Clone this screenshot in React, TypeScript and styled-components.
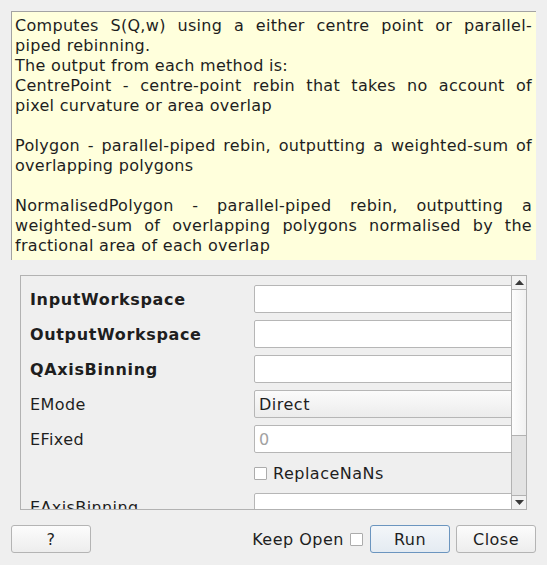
import styled, { createGlobalStyle } from "styled-components";

const GlobalStyle = createGlobalStyle`
  html, body {
    margin: 0;
    padding: 0;
    background: #efefef;
  }
  body {
    font-family: "DejaVu Sans", "Liberation Sans", sans-serif;
    font-size: 16px;
    color: #1e1e1e;
  }
`;

type Prop = {
  name: string;
  bold?: boolean;
  kind: "text" | "combo" | "check";
  value?: string;
  placeholder?: string;
};

const properties: Prop[] = [
  { name: "InputWorkspace", bold: true, kind: "text" },
  { name: "OutputWorkspace", bold: true, kind: "text" },
  { name: "QAxisBinning", bold: true, kind: "text" },
  { name: "EMode", kind: "combo", value: "Direct" },
  { name: "EFixed", kind: "text", placeholder: "0" },
  { name: "ReplaceNaNs", kind: "check" },
  { name: "EAxisBinning", kind: "text" },
];

// paragraphs of the algorithm summary, wrapped as the dialog wraps them
const summary: string[][] = [
  ["Computes S(Q,w) using a either centre point or parallel-", "piped rebinning."],
  ["The output from each method is:"],
  ["CentrePoint - centre-point rebin that takes no account of", "pixel curvature or area overlap"],
  [],
  ["Polygon - parallel-piped rebin, outputting a weighted-sum of", "overlapping polygons"],
  [],
  [
    "NormalisedPolygon - parallel-piped rebin, outputting a",
    "weighted-sum of overlapping polygons normalised by the",
    "fractional area of each overlap",
  ],
];

const App = () => {
  return (
    <Dialog>
      <GlobalStyle />
      <Description>
        {summary.map((para, i) =>
          para.length === 0 ? (
            <Blank key={i} />
          ) : (
            <div key={i}>
              {para.map((line, j) => (
                <Line key={j} $last={j === para.length - 1}>
                  {line}
                </Line>
              ))}
            </div>
          )
        )}
      </Description>

      <Panel>
        <Viewport>
          <PropGrid>
            {properties.map((p) =>
              p.kind === "check" ? (
                <CheckRow key={p.name}>
                  <span />
                  <CheckLabel>
                    <CheckBox />
                    {p.name}
                  </CheckLabel>
                </CheckRow>
              ) : (
                <Row key={p.name}>
                  <Label $bold={p.bold}>{p.name}</Label>
                  {p.kind === "combo" ? (
                    <Combo>{p.value}</Combo>
                  ) : (
                    <Field>{p.placeholder && <Placeholder>{p.placeholder}</Placeholder>}</Field>
                  )}
                </Row>
              )
            )}
          </PropGrid>
        </Viewport>
        <ScrollBar>
          <ArrowButton>
            <svg width="9" height="5" viewBox="0 0 9 5">
              <path d="M0 5 L4.5 0 L9 5 Z" fill="#3a3a3a" />
            </svg>
          </ArrowButton>
          <Thumb />
          <Track />
          <ArrowButton $down>
            <svg width="9" height="5" viewBox="0 0 9 5">
              <path d="M0 0 L4.5 5 L9 0 Z" fill="#3a3a3a" />
            </svg>
          </ArrowButton>
        </ScrollBar>
      </Panel>

      <ButtonBar>
        <Button>?</Button>
        <Spacer />
        <KeepOpen>
          Keep Open
          <CheckBox />
        </KeepOpen>
        <Button $default>Run</Button>
        <Button>Close</Button>
      </ButtonBar>
    </Dialog>
  );
};

export default App;

const Dialog = styled.div`
  width: 547px;
  height: 565px;
  box-sizing: border-box;
  padding: 11px 11px 12px 11px;
  display: flex;
  flex-direction: column;
  gap: 15px;
  overflow: hidden;
  letter-spacing: 0.5px;
`;

const Description = styled.div`
  height: 249px;
  flex: none;
  box-sizing: border-box;
  background: #ffffdc;
  border-top: 1px solid #a3a3a3;
  border-left: 1px solid #a3a3a3;
  padding: 4px 4px 0 3px;
  line-height: 20px;
  letter-spacing: 0.3px;
  overflow: hidden;
`;

const Line = styled.div<{ $last?: boolean }>`
  white-space: nowrap;
  text-align: justify;
  text-align-last: ${(p) => (p.$last ? "left" : "justify")};
`;

const Blank = styled.div`
  height: 20px;
`;

const Panel = styled.div`
  height: 235px;
  flex: none;
  margin: 0 9px;
  box-sizing: border-box;
  border: 1px solid #b2b2b2;
  display: flex;
`;

const Viewport = styled.div`
  flex: 1;
  overflow: hidden;
  padding: 9px 0 0 9px;
`;

const PropGrid = styled.div`
  display: flex;
  flex-direction: column;
  gap: 7px;
`;

const Row = styled.div`
  display: grid;
  grid-template-columns: 224px 280px;
  align-items: center;
  height: 28px;
`;

const CheckRow = styled(Row)`
  height: 26px;
`;

const Label = styled.div<{ $bold?: boolean }>`
  font-weight: ${(p) => (p.$bold ? "bold" : "normal")};
  letter-spacing: ${(p) => (p.$bold ? "0.65px" : "0.4px")};
  white-space: nowrap;
`;

const Field = styled.div`
  height: 28px;
  box-sizing: border-box;
  background: #ffffff;
  border: 1px solid #b6b6b6;
  border-radius: 2px;
  padding: 0 4px;
  display: flex;
  align-items: center;
`;

const Placeholder = styled.span`
  color: #a2a2a2;
`;

const Combo = styled(Field)`
  background: linear-gradient(#fbfbfb, #ececec);
`;

const CheckLabel = styled.label`
  display: flex;
  align-items: center;
  gap: 6px;
`;

const CheckBox = styled.span`
  display: inline-block;
  width: 13px;
  height: 13px;
  box-sizing: border-box;
  border: 1px solid #acacac;
  border-radius: 1px;
  background: #ffffff;
`;

const ScrollBar = styled.div`
  width: 14px;
  flex: none;
  border-left: 1px solid #b2b2b2;
  display: flex;
  flex-direction: column;
`;

const ArrowButton = styled.div<{ $down?: boolean }>`
  height: 13px;
  flex: none;
  display: flex;
  align-items: center;
  justify-content: center;
  background: #f2f2f2;
  ${(p) => (p.$down ? "border-top: 1px solid #b2b2b2;" : "border-bottom: 1px solid #b2b2b2;")}
`;

const Thumb = styled.div`
  height: 146px;
  flex: none;
  box-sizing: border-box;
  background: linear-gradient(90deg, #fdfdfd, #f1f1f1);
  border-bottom: 1px solid #b2b2b2;
`;

const Track = styled.div`
  flex: 1;
  background: #e3e3e3;
`;

const ButtonBar = styled.div`
  height: 28px;
  flex: none;
  display: flex;
  align-items: center;
  gap: 6px;
`;

const Spacer = styled.div`
  flex: 1;
`;

const KeepOpen = styled.label`
  display: flex;
  align-items: center;
  gap: 6px;
  margin-right: 1px;
`;

const Button = styled.button<{ $default?: boolean }>`
  width: 80px;
  height: 28px;
  box-sizing: border-box;
  font-family: "DejaVu Sans", "Liberation Sans", sans-serif;
  font-size: 16px;
  letter-spacing: 0.5px;
  color: #1e1e1e;
  border-radius: 3px;
  border: 1px solid ${(p) => (p.$default ? "#6b95bf" : "#b4b4b4")};
  background: ${(p) =>
    p.$default ? "linear-gradient(#f3f6f9, #e4ebf2)" : "linear-gradient(#fcfcfc, #ededed)"};
  padding: 0;
`;
